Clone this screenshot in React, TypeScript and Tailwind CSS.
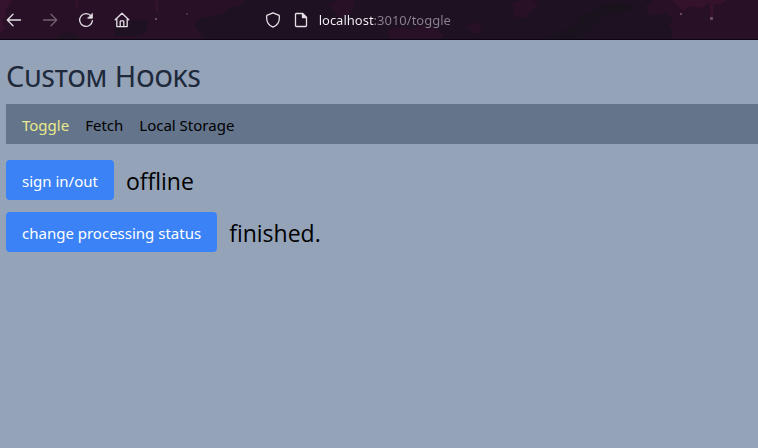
import { useState } from "react";
import type { ReactNode } from "react";

function Icon({ children }: { children: ReactNode }) {
  return (
    <svg
      width="16"
      height="16"
      viewBox="0 0 16 16"
      fill="none"
      stroke="currentColor"
      strokeWidth="1.3"
      strokeLinecap="round"
      strokeLinejoin="round"
      aria-hidden="true"
    >
      {children}
    </svg>
  );
}

function ThemeArt() {
  return (
    <svg
      className="absolute inset-0 h-full w-full"
      viewBox="0 0 758 40"
      preserveAspectRatio="xMinYMin slice"
      aria-hidden="true"
    >
      <rect width="758" height="40" fill="#1e1121" />
      <path d="M0 0H246L240 5L228 8L222 14L200 18L194 24L198 31L204 40H0Z" fill="#281126" />
      <path d="M0 0H12L9 6L5 9L7 15L2 20L5 28L0 33Z" fill="#35122d" />
      <path d="M114 27L122 23L138 19L148 22L146 32L138 36H114Z" fill="#1e1121" />
      <path d="M58 36L66 31L76 34L80 40H54Z" fill="#201123" />
      <path d="M76 0H78V7H76ZM155 0H158V12H156Z" fill="#35122d" />
      <path d="M328 5L340 0H354V8L350 14L340 18L334 10ZM388 31L394 27L412 29L420 25L436 27L444 36L440 40H390ZM466 26L478 22L482 30L474 34ZM512 4L520 0H532L540 5L530 11L526 18L514 17Z" fill="#281126" />
      <path d="M645 7L654 0H758V40H670L674 32L669 26L674 18L664 13L650 16Z" fill="#281126" />
      <path d="M672 0H727L720 5L708 3L702 8L690 6L683 11L678 5Z" fill="#35122b" />
      <path d="M710 4H713V18H711Z" fill="#3a122e" />
      <path d="M582 15L594 12L602 5L622 3L636 7L622 13L602 15L594 26L584 34L572 38H546L560 32L574 26Z" fill="#1a131e" />
      <g fill="#6b4865">
        <rect x="155" y="18" width="2" height="2" />
        <rect x="186" y="13" width="2" height="2" opacity=".5" />
        <rect x="680" y="13" width="2" height="2" />
        <rect x="710" y="17" width="3" height="3" />
      </g>
    </svg>
  );
}

function BrowserBar() {
  const [address, setAddress] = useState("localhost:3010/toggle");
  return (
    <header className="relative h-10 overflow-hidden border-b border-[#0c0610] text-[#e4dfe5]">
      <ThemeArt />
      <div className="relative flex h-full items-center">
        <div className="flex w-1/3 shrink-0 items-center gap-5 pl-1.5">
          <button type="button" aria-label="Back">
            <Icon><path d="M14.5 8H1.5M7 2.3L1.3 8L7 13.7" /></Icon>
          </button>
          <button type="button" aria-label="Forward" className="text-[#71606f]" disabled>
            <Icon><path d="M1.5 8H14.5M9 2.3L14.7 8L9 13.7" /></Icon>
          </button>
          <button type="button" aria-label="Reload">
            <Icon>
              <path d="M13.2 4.2A6.4 6.4 0 1 0 14.4 8.6" />
              <path d="M14.4 1.7V6.2H9.9Z" fill="currentColor" strokeWidth="0.8" />
            </Icon>
          </button>
          <button type="button" aria-label="Home">
            <Icon>
              <path d="M1.2 7.8L8 1.2L14.8 7.8M2.8 6.5V14.6H13.2V6.5M6.2 14.4V9.6Q6.2 8.8 7 8.8H9Q9.8 8.8 9.8 9.6V14.4" />
            </Icon>
          </button>
        </div>
        <div className="flex flex-1 items-center pl-3">
          <button type="button" aria-label="Tracking protection" className="mr-3">
            <Icon><path d="M8 .8L14.2 3.4C14.9 8.5 12.6 13.2 8 15.2C3.4 13.2 1.1 8.5 1.8 3.4Z" /></Icon>
          </button>
          <button type="button" aria-label="Site information" className="mr-2.5">
            <Icon>
              <path d="M3.3 1.5H9.5L13.5 5.5V13.5Q13.5 14.5 12.5 14.5H3.5Q2.5 14.5 2.5 13.5V2.3Q2.5 1.5 3.3 1.5Z" />
              <path d="M9.5 1.5V5.5H13.5Z" fill="currentColor" />
            </Icon>
          </button>
          <input
            type="text"
            aria-label="Address"
            value={address}
            onChange={(e) => setAddress(e.target.value)}
            className="min-w-0 flex-1 bg-linear-to-r from-[#f5f2f6] from-[55px] to-[#8c818f] to-[55px] bg-clip-text font-['Noto_Sans',sans-serif] text-[13px] leading-5 text-transparent caret-white outline-none"
          />
        </div>
      </div>
    </header>
  );
}

const tabs = ["Toggle", "Fetch", "Local Storage"];

function ToggleRow({ label, on, off }: { label: string; on: string; off: string }) {
  const [active, setActive] = useState(false);
  return (
    <div className="flex items-center gap-3">
      <button
        type="button"
        onClick={() => setActive(!active)}
        className="h-10 rounded bg-[#3b82f6] px-4 pt-0.5 text-[15px] text-white"
      >
        {label}
      </button>
      <span className="pt-0.5 font-['Open_Sans','Noto_Sans',sans-serif] text-[23px] leading-8 text-black">
        {active ? on : off}
      </span>
    </div>
  );
}

export default function App() {
  return (
    <div className="flex min-h-screen flex-col bg-[#94a3b8] font-['Noto_Sans',sans-serif]">
      <BrowserBar />
      <main className="flex-1 pt-[18px] pl-1.5">
        <h1 className="mb-2.5 text-[29px] leading-9 text-[#1e293b] [font-variant:small-caps]">
          Custom Hooks
        </h1>
        <nav className="mb-4 flex h-10 items-center gap-4 bg-[#64748b] px-4 pt-0.5 text-[15px]">
          {tabs.map((tab, i) => (
            <a key={tab} href="#" className={i === 0 ? "text-[#e9ea8c]" : "text-black"}>
              {tab}
            </a>
          ))}
        </nav>
        <div className="flex flex-col gap-3">
          <ToggleRow label="sign in/out" on="online" off="offline" />
          <ToggleRow label="change processing status" on="processing..." off="finished." />
        </div>
      </main>
    </div>
  );
}
